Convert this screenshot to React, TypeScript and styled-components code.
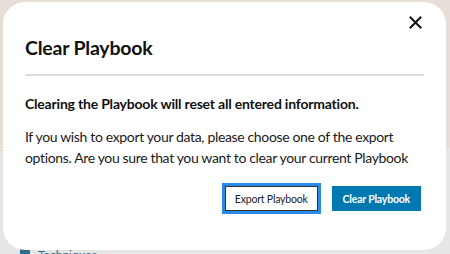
import React from "react";
import styled, { createGlobalStyle } from "styled-components";

const Global = createGlobalStyle`
  html, body { margin: 0; padding: 0; }
  body {
    width: 450px;
    height: 254px;
    overflow: hidden;
    background: #e4e2df;
    font-family: "Lato", "Open Sans", sans-serif;
  }
`;

const Page = styled.div`
  position: relative;
  width: 450px;
  height: 254px;
  background: linear-gradient(#e6dfd8 0, #e6dfd8 148px, #e7e6e4 148px);
  overflow: hidden;
`;

const BackdropRule = styled.div`
  position: absolute;
  left: 0;
  top: 150px;
  width: 10px;
  height: 1px;
  background: #e8c9a8;
`;

const BackdropLink = styled.div`
  position: absolute;
  left: 20px;
  top: 249px;
  display: flex;
  align-items: flex-start;
  gap: 8px;
  color: #2f6f91;
  font-size: 12px;
  line-height: 12px;
`;

const BackdropIcon = styled.span`
  width: 10px;
  height: 10px;
  background: #2c6e8f;
`;

const Modal = styled.div`
  position: absolute;
  left: 3px;
  top: 2px;
  width: 443px;
  height: 248px;
  box-sizing: border-box;
  background: #ffffff;
  border-radius: 22px;
  padding: 26px 22px 0 22px;
  display: flex;
  flex-direction: column;
`;

const CloseButton = styled.button`
  position: absolute;
  top: 11px;
  right: 22px;
  width: 18px;
  height: 18px;
  padding: 0;
  border: none;
  background: none;
  display: flex;
  align-items: center;
  justify-content: center;
  cursor: pointer;
`;

const Title = styled.h2`
  margin: 0;
  font-size: 19.5px;
  line-height: 40px;
  font-weight: 700;
  letter-spacing: -0.2px;
  color: #111;
`;

const Divider = styled.hr`
  margin: 6px 0 0 0;
  border: none;
  height: 2px;
  background: #dcdcdc;
`;

const Lead = styled.p`
  margin: 18px 0 0 0;
  font-size: 14px;
  line-height: 20px;
  font-weight: 700;
  letter-spacing: -0.2px;
  color: #111;
`;

const Body = styled.p`
  margin: 12px 0 0 0;
  font-size: 14px;
  line-height: 21px;
  font-weight: 400;
  letter-spacing: -0.35px;
  color: #1a1a1a;
`;

const Actions = styled.div`
  margin-top: 18px;
  display: flex;
  justify-content: flex-end;
  align-items: center;
  gap: 14px;
  padding-right: 3px;
`;

const Button = styled.button<{ $primary?: boolean }>`
  height: 25px;
  box-sizing: border-box;
  padding: 0 ${(p) => (p.$primary ? 10 : 9)}px;
  font-family: inherit;
  font-size: 10.5px;
  letter-spacing: -0.2px;
  font-weight: ${(p) => (p.$primary ? 700 : 400)};
  color: ${(p) => (p.$primary ? "#ffffff" : "#222")};
  background: ${(p) => (p.$primary ? "#0078b1" : "#ffffff")};
  border: ${(p) => (p.$primary ? "1px solid #0078b1" : "1px solid #333")};
  border-radius: 0;
  outline: ${(p) => (p.$primary ? "none" : "3px solid #2a8ae8")};
  outline-offset: 0;
  cursor: pointer;
`;

export default function App() {
  return (
    <>
      <Global />
      <Page>
        <BackdropRule />
        <BackdropLink>
          <BackdropIcon />
          Techniques
        </BackdropLink>
        <Modal role="dialog" aria-modal="true">
          <CloseButton aria-label="Close">
            <svg width="13" height="13" viewBox="0 0 13 13">
              <path d="M1.5 1.5 L11.5 11.5 M11.5 1.5 L1.5 11.5" stroke="#111" strokeWidth="2" strokeLinecap="square" />
            </svg>
          </CloseButton>
          <Title>Clear Playbook</Title>
          <Divider />
          <Lead>Clearing the Playbook will reset all entered information.</Lead>
          <Body>
            If you wish to export your data, please choose one of the export options. Are you sure that you want to clear your current Playbook
          </Body>
          <Actions>
            <Button>Export Playbook</Button>
            <Button $primary>Clear Playbook</Button>
          </Actions>
        </Modal>
      </Page>
    </>
  );
}
